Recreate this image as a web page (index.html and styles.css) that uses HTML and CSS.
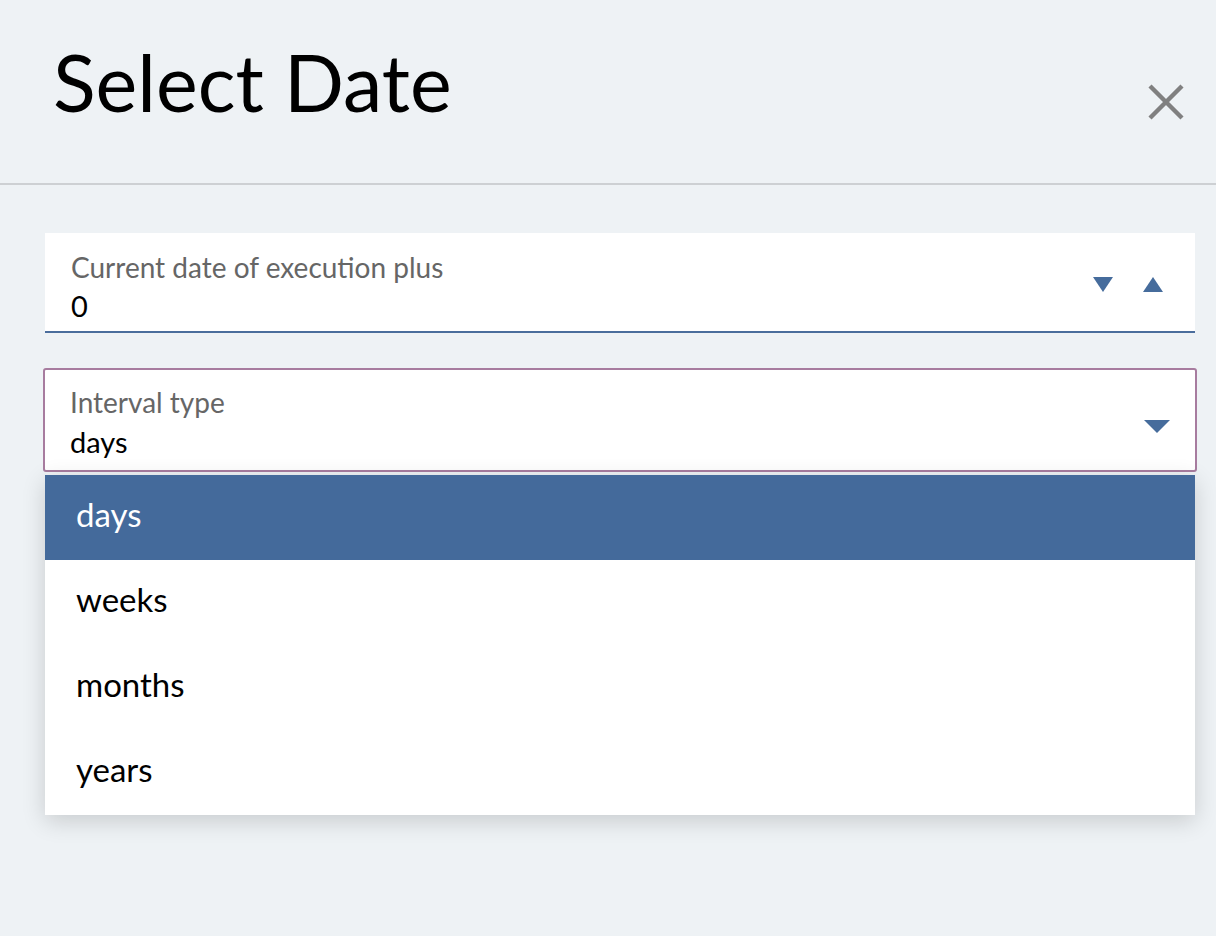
FILE: index.html
```html
<!DOCTYPE html>
<html>
<head>
<meta charset="utf-8">
<link rel="stylesheet" href="styles.css">
</head>
<body>
<div class="dialog">
  <header class="head">
    <h1 class="title">Select Date</h1>
    <button class="close" aria-label="Close">
      <svg width="36" height="36" viewBox="0 0 36 36"><path d="M2 2 L34 34 M34 2 L2 34" stroke="#808080" stroke-width="4.4" fill="none"/></svg>
    </button>
  </header>
  <main class="body">
    <div class="field number">
      <div class="texts">
        <div class="label">Current date of execution plus</div>
        <div class="value">0</div>
      </div>
      <div class="spin">
        <svg width="20" height="15" viewBox="0 0 20 15"><path d="M0 0 H20 L10 15 Z" fill="#466c9c"/></svg>
        <svg width="20" height="15" viewBox="0 0 20 15"><path d="M0 15 H20 L10 0 Z" fill="#466c9c"/></svg>
      </div>
    </div>
    <div class="selectwrap">
      <div class="field select">
        <div class="texts">
          <div class="label">Interval type</div>
          <div class="value tall">days</div>
        </div>
        <svg class="caret" width="26" height="13" viewBox="0 0 26 13"><path d="M0 0 H26 L13 13 Z" fill="#466c9c"/></svg>
      </div>
      <ul class="menu">
        <li class="opt selected">days</li>
        <li class="opt">weeks</li>
        <li class="opt">months</li>
        <li class="opt">years</li>
      </ul>
    </div>
  </main>
</div>
</body>
</html>
```
FILE: styles.css
```css
* { box-sizing: border-box; }
html, body { margin: 0; padding: 0; }
body {
  background: #eef2f5;
  font-family: "Lato", "Noto Sans", sans-serif;
  width: 1216px;
  height: 936px;
  overflow: hidden;
}
.head {
  height: 185px;
  border-bottom: 2px solid #cdd0d3;
  display: flex;
  align-items: flex-start;
  justify-content: space-between;
  padding: 0 32px 0 53px;
}
.title {
  margin: 32px 0 0 0;
  font-weight: 400;
  font-size: 79px;
  line-height: 100px;
  color: #000;
}
.close {
  margin-top: 84px;
  background: none;
  border: 0;
  padding: 0;
  width: 36px;
  height: 36px;
}
.close svg { display: block; }
.body {
  padding: 48px 21px 0 45px;
}
.field {
  background: #fff;
  display: flex;
  align-items: flex-start;
  justify-content: space-between;
}
.number {
  width: 1150px;
  height: 100px;
  border-bottom: 2px solid #4a6d9c;
  padding: 17px 32px 0 26px;
}
.label {
  font-size: 28px;
  color: #666;
  line-height: 34px;
}
.value {
  font-size: 29px;
  color: #000;
  line-height: 43px;
}
.value.tall { line-height: 45px; }
.spin {
  display: flex;
  gap: 30px;
  margin-top: 27px;
}
.spin svg { display: block; }
.selectwrap {
  margin-top: 35px;
  margin-left: -2px;
  width: 1154px;
}
.select {
  height: 104px;
  border: 2px solid #a77c9f;
  border-radius: 3px;
  padding: 15px 25px 0 25px;
}
.caret { display: block; margin-top: 35px; }
.menu {
  list-style: none;
  margin: 3px 0 0 2px;
  padding: 0;
  width: 1150px;
  background: #fff;
  box-shadow: 0 6px 22px rgba(0,0,0,0.16);
}
.opt {
  height: 85px;
  display: flex;
  align-items: center;
  padding: 0 0 8px 31px;
  font-size: 33px;
  color: #000;
}
.opt.selected {
  background: #446a9b;
  color: #fff;
}
```
